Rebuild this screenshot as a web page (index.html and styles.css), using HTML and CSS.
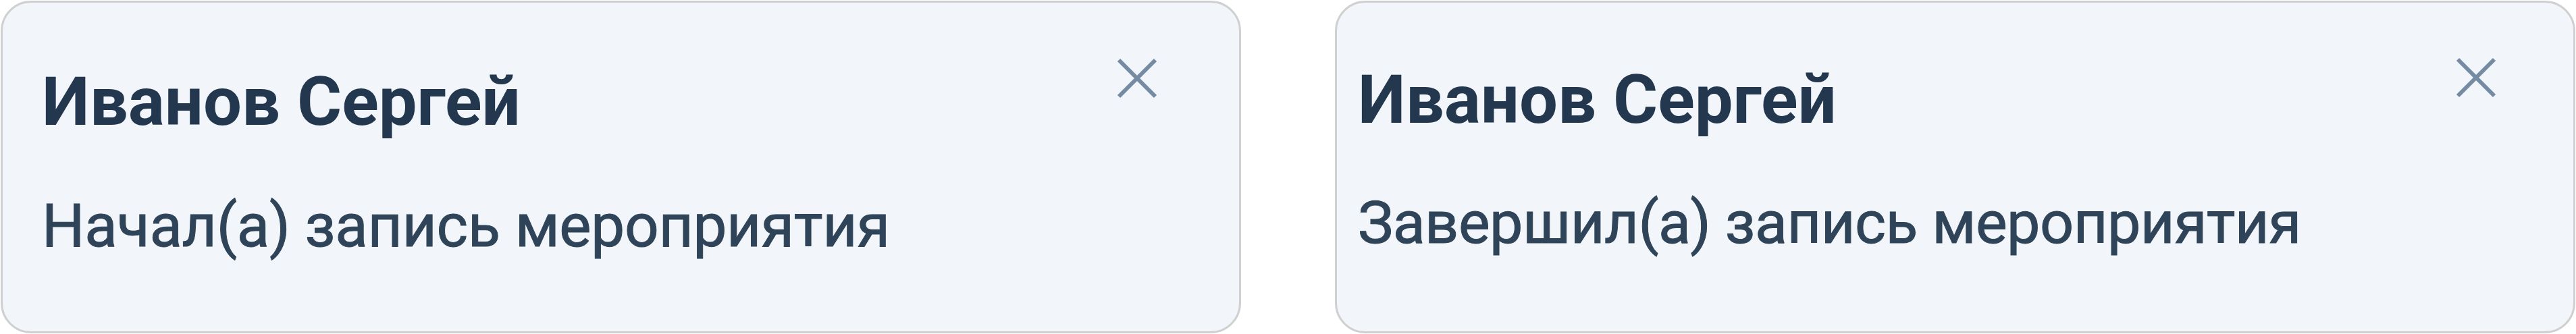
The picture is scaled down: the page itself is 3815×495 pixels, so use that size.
FILE: index.html
```html
<!DOCTYPE html>
<html lang="ru">
<head>
  <meta charset="UTF-8">
  <meta name="viewport" content="width=device-width, initial-scale=1.0">
  <title>Уведомления</title>
  <link rel="stylesheet" href="styles.css">
</head>
<body>
  <div class="notifications">
    <div class="notification notification-start">
      <div class="content">
        <div class="name">Иванов Сергей</div>
        <div class="message">Начал(а) запись мероприятия</div>
      </div>
      <svg class="close" viewBox="0 0 60 60"><path d="M3 3L57 57M57 3L3 57"/></svg>
    </div>
    <div class="notification notification-end">
      <div class="content">
        <div class="name">Иванов Сергей</div>
        <div class="message">Завершил(а) запись мероприятия</div>
      </div>
      <svg class="close" viewBox="0 0 60 60"><path d="M3 3L57 57M57 3L3 57"/></svg>
    </div>
  </div>
</body>
</html>
```
FILE: styles.css
```css
body {
  margin: 0;
  background: #fff;
  font-family: Roboto, "Liberation Sans", sans-serif;
}

.notifications {
  display: flex;
  gap: 139px;
  padding: 1px;
}

.notification {
  box-sizing: border-box;
  display: flex;
  justify-content: space-between;
  align-items: flex-start;
  width: 1837px;
  height: 493px;
  background: #f2f5fa;
  border: 3px solid #d0d0d0;
  border-radius: 45px;
}

.notification-start {
  padding: 87px 121px 0 58px;
}

.notification-end {
  padding: 84px 114px 0 31px;
}

.content {
  display: flex;
  flex-direction: column;
  gap: 69px;
  white-space: nowrap;
}

.notification-end .content {
  gap: 67px;
}

.name {
  font-size: 101px;
  line-height: 120px;
  font-weight: 700;
  color: #23384f;
}

.message {
  font-size: 89px;
  line-height: 110px;
  letter-spacing: -0.3px;
  color: #2f4458;
  -webkit-text-stroke: 1px #2f4458;
}

.notification-end .message {
  font-size: 88px;
  letter-spacing: -0.5px;
}

.close {
  width: 60px;
  height: 60px;
  margin-top: -5px;
  fill: none;
  stroke: #748ba3;
  stroke-width: 6;
}

.notification-end .close {
  margin-top: -3px;
}
```
